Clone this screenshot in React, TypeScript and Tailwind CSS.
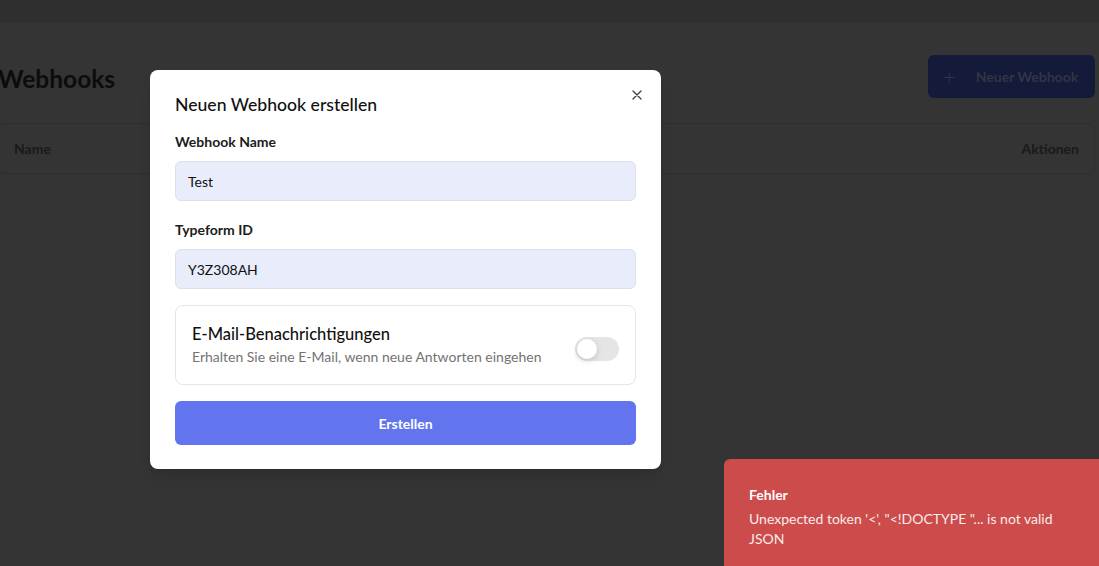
import React from "react";

export default function App() {
  return (
    <div className="relative w-[1099px] h-[566px] overflow-hidden bg-[#333433]" style={{ fontFamily: 'Lato, "Noto Sans", sans-serif' }}>
      {/* top bar */}
      <div className="h-[22px] bg-[#2f2f2f] border-b border-[#2b2b2b]" />
      {/* page content */}
      <div className="ml-[-2px] mr-[4px]">
        <div className="flex items-center justify-between mt-[33px] h-[43px]">
          <h1 className="text-[24.5px] font-bold text-[#0c0c0d] mt-[5px]">Webhooks</h1>
          <div className="flex items-center gap-[20px] h-[43px] w-[167px] pl-[15px] rounded-[6px] bg-[#141a3a] text-[#333543] text-[14px] font-bold">
            <span className="text-[22px] font-light leading-none">+</span>
            <span>Neuer Webhook</span>
          </div>
        </div>
        <div className="mt-[25px] h-[51px] border border-[#2d2e2d] rounded-[6px] flex items-center justify-between px-[15px] text-[14px] font-bold text-[#1a1a1a]">
          <span>Name</span>
          <span>Aktionen</span>
        </div>
      </div>

      {/* modal */}
      <div className="absolute left-[150px] top-[70px] w-[511px] h-[399px] bg-white rounded-[8px] px-[25px] pt-[23px] shadow-lg">
        <div className="flex items-start justify-between">
          <h2 className="text-[17.6px] font-medium text-[#111] leading-[24px]">Neuen Webhook erstellen</h2>
          <svg className="mt-[-6px] mr-[-9px]" width="16" height="16" viewBox="0 0 24 24" fill="none" stroke="#444" strokeWidth="2" strokeLinecap="round">
            <path d="M18 6 6 18M6 6l12 12" />
          </svg>
        </div>
        <div className="mt-[15px] text-[14px] font-bold text-[#1c1c1c] leading-[20px]">Webhook Name</div>
        <div className="mt-[9px] h-[40px] rounded-[6px] border border-[#dde0ea] bg-[#e8ecfb] flex items-center px-[12px] text-[14px] text-[#111]">Test</div>
        <div className="mt-[19px] text-[14px] font-bold text-[#1c1c1c] leading-[20px]">Typeform ID</div>
        <div className="mt-[9px] h-[40px] rounded-[6px] border border-[#dde0ea] bg-[#e8ecfb] flex items-center px-[12px] text-[14px] text-[#111]">Y3Z308AH</div>
        <div className="mt-[16px] h-[80px] rounded-[8px] border border-[#e5e5e5] flex items-center justify-between pl-[16px] pr-[16px]">
          <div>
            <div className="text-[16.5px] font-medium text-[#111] leading-[22px]">E-Mail-Benachrichtigungen</div>
            <div className="text-[14px] text-[#737373] leading-[20px] mt-[2px]">Erhalten Sie eine E-Mail, wenn neue Antworten eingehen</div>
          </div>
          <div className="mt-[8px] w-[44px] h-[24px] rounded-full bg-[#e5e5e5] p-[2px] flex items-center">
            <div className="w-[20px] h-[20px] rounded-full bg-white shadow-[0_2px_6px_rgba(0,0,0,0.15)]" />
          </div>
        </div>
        <div className="mt-[16px] h-[44px] rounded-[6px] bg-[#6275ef] flex items-center justify-center text-white text-[14px] font-bold">Erstellen</div>
      </div>

      {/* toast */}
      <div className="absolute left-[724px] top-[459px] w-[380px] h-[120px] bg-[#cc4c4c] rounded-[6px] px-[25px] pt-[26px] text-white">
        <div className="text-[14px] font-bold leading-[20px]">Fehler</div>
        <div className="text-[14px] leading-[20px] mt-[4px] w-[320px] text-[#fbeaea]">Unexpected token '&lt;', "&lt;!DOCTYPE "... is not valid JSON</div>
      </div>
    </div>
  );
}
